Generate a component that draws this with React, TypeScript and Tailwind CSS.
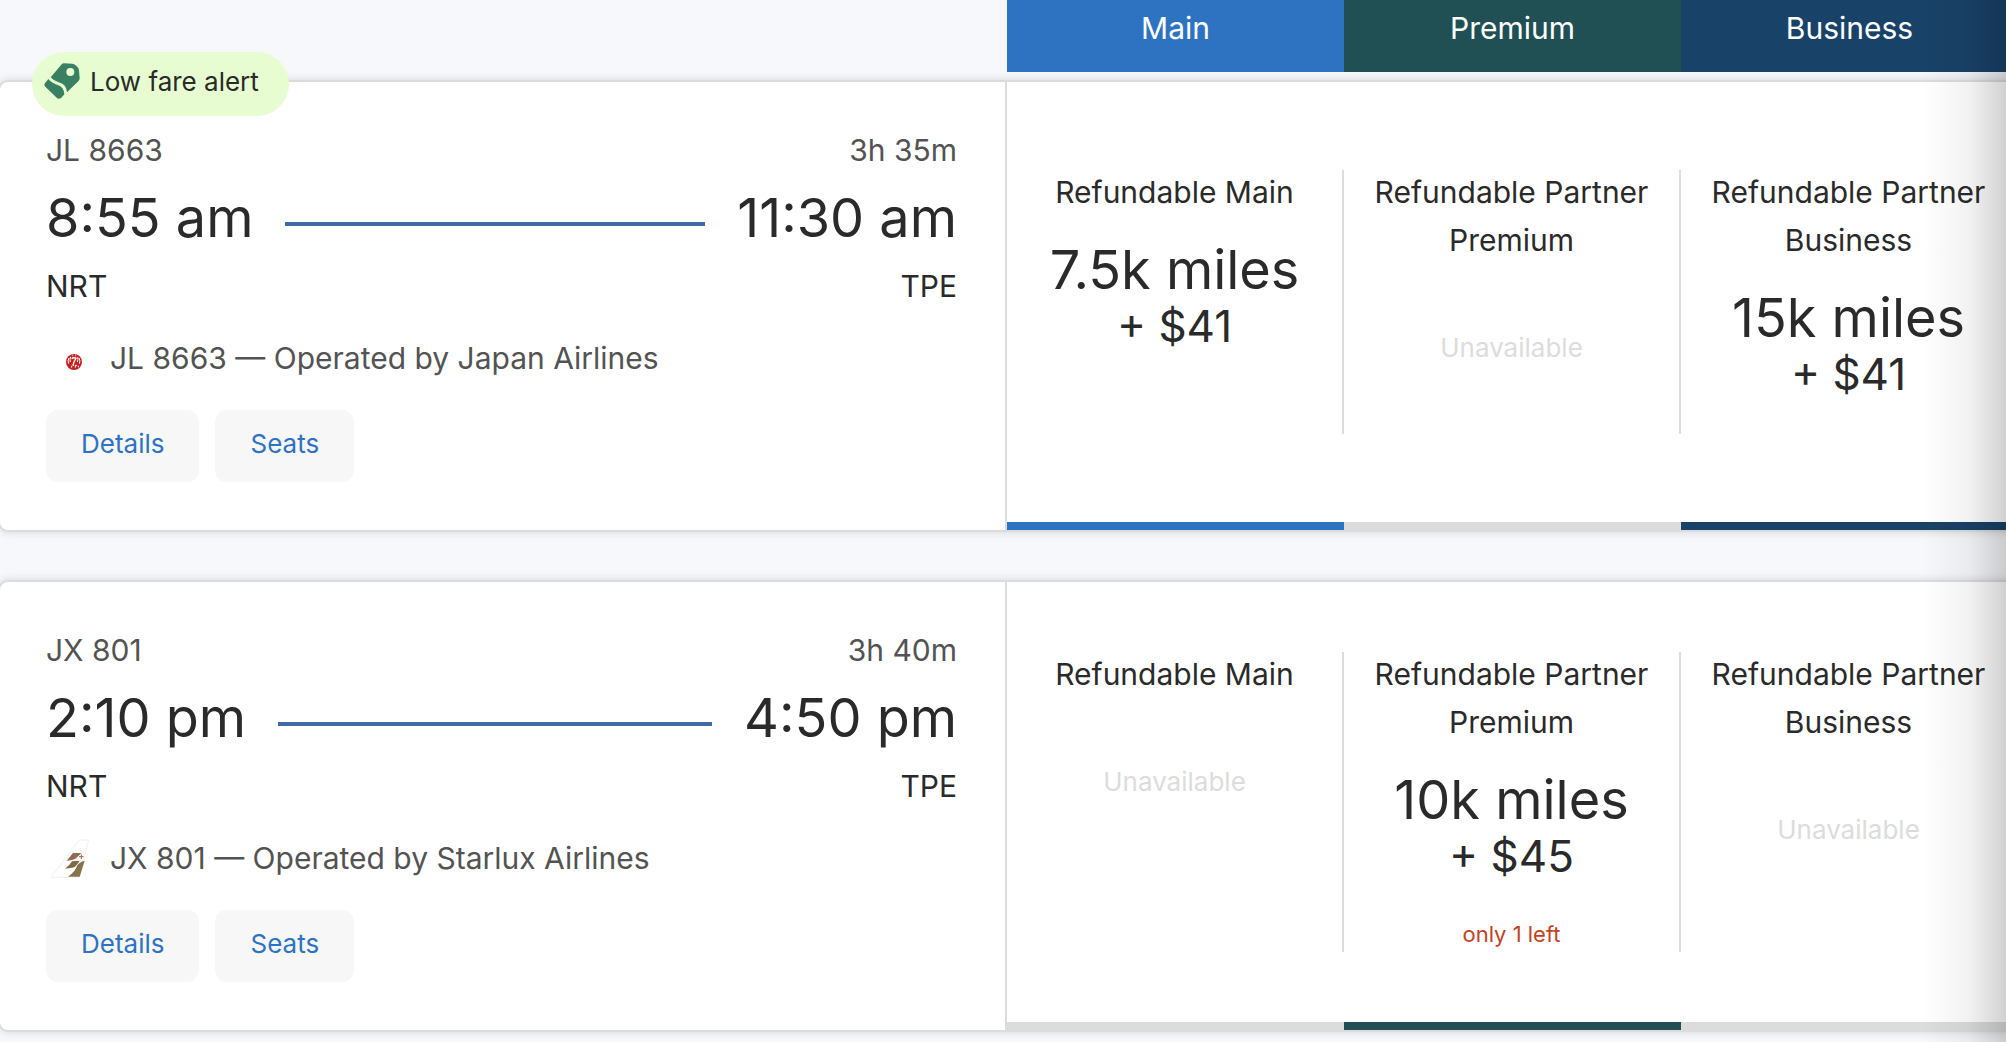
import type { ReactNode } from 'react';
import clsx from 'clsx';

type Fare = {
  name: string;
  cabin: 'main' | 'premium' | 'business';
  miles?: string;
  cash?: string;
  seatsLeft?: string;
};

type Flight = {
  number: string;
  duration: string;
  depart: string;
  arrive: string;
  from: string;
  to: string;
  operator: string;
  logo: ReactNode;
  alert?: string;
  fares: Fare[];
};

const cabins = [
  { label: 'Main', color: 'bg-[#2e73c2]' },
  { label: 'Premium', color: 'bg-[#205053]' },
  { label: 'Business', color: 'bg-[#194268]' },
];

const barColors = {
  main: 'bg-[#2e73c2]',
  premium: 'bg-[#205053]',
  business: 'bg-[#194268]',
};

function TagIcon() {
  return (
    <svg viewBox="0 0 106 108" className="h-9 w-9 shrink-0" fill="#388061" aria-hidden="true">
      <path
        fillRule="evenodd"
        d="M58 1 84 2Q90 3 94 7L100 13Q104 17 104 23L106 46Q106 51 102 55L68 88Q67 74 60 67 54 61 43 58 28 54 19 43 20 41 23 38L52 4Q55 1 58 1ZM78 15A12 12 0 1 0 78 39 12 12 0 1 0 78 15Z"
      />
      <path d="M12 48Q24 62 40 66 59 72 60 94L51 104Q44 110 37 104L3 71Q-2 66 2 61Z" />
    </svg>
  );
}

function JapanAirlinesLogo() {
  return (
    <svg viewBox="-60 -48 168 120" className="h-10 w-14" aria-hidden="true">
      <circle cx="24" cy="24" r="24" fill="#c4201f" />
      <g fill="none" stroke="#fff">
        <path d="M17 14Q23 9 30 13L23 26 21 36" strokeWidth="4" />
        <path d="M9 12Q4 21 8 29M39 12Q44 21 40 29" strokeWidth="3" />
        <path d="M14 8Q11 16 13 24M35 9Q37 17 34 24" strokeWidth="3" />
        <path d="M17 41V35M28 41V34H33M37 40V35" strokeWidth="3" />
        <path d="M20 2V7M29 2V7" strokeWidth="2" />
      </g>
    </svg>
  );
}

function StarluxLogo() {
  return (
    <svg viewBox="-12 -4 168 120" className="h-10 w-14" aria-hidden="true">
      <path d="M88 2H116L89 114H3Z" fill="#fff" stroke="#e9e9e9" strokeWidth="2" />
      <path d="M69 41H94L82 53Q76 62 50 64Z" fill="#94684f" />
      <path d="M66 66 89 64Q79 82 67 85L45 88Q58 80 66 66Z" fill="#806a49" />
      <path d="M104 64 89 112H54Q79 93 81 79Q88 68 104 64Z" fill="#85744b" />
      <path d="M94 45V59M87 52H101" stroke="#94684f" strokeWidth="3" />
    </svg>
  );
}

const flights: Flight[] = [
  {
    number: 'JL 8663',
    duration: '3h 35m',
    depart: '8:55 am',
    arrive: '11:30 am',
    from: 'NRT',
    to: 'TPE',
    operator: 'JL 8663 — Operated by Japan Airlines',
    logo: <JapanAirlinesLogo />,
    alert: 'Low fare alert',
    fares: [
      { name: 'Refundable Main', cabin: 'main', miles: '7.5k miles', cash: '+ $41' },
      { name: 'Refundable Partner Premium', cabin: 'premium' },
      { name: 'Refundable Partner Business', cabin: 'business', miles: '15k miles', cash: '+ $41' },
    ],
  },
  {
    number: 'JX 801',
    duration: '3h 40m',
    depart: '2:10 pm',
    arrive: '4:50 pm',
    from: 'NRT',
    to: 'TPE',
    operator: 'JX 801 — Operated by Starlux Airlines',
    logo: <StarluxLogo />,
    fares: [
      { name: 'Refundable Main', cabin: 'main' },
      {
        name: 'Refundable Partner Premium',
        cabin: 'premium',
        miles: '10k miles',
        cash: '+ $45',
        seatsLeft: 'only 1 left',
      },
      { name: 'Refundable Partner Business', cabin: 'business' },
    ],
  },
];

function FareCell({ fare }: { fare: Fare }) {
  return (
    <button
      type="button"
      disabled={!fare.miles}
      className="flex flex-col items-center border-r-2 border-[#dcdcdc] px-4 text-center text-[#2a2a2a]"
    >
      <span className="-mt-0.5 text-[30px] leading-[48px]">{fare.name}</span>
      {fare.miles ? (
        <>
          <span className="mt-[26px] text-[54px] leading-[56px]">{fare.miles}</span>
          <span className="text-[44px] leading-[56px]">{fare.cash}</span>
          <span className="mt-8 text-[22px] leading-9 text-[#bf4323]">{fare.seatsLeft}</span>
        </>
      ) : (
        <span className="mt-16 text-[26px] leading-10 text-[#dcdcdc]">Unavailable</span>
      )}
    </button>
  );
}

function FlightCard({ flight }: { flight: Flight }) {
  return (
    <article className="relative grid grid-cols-[minmax(0,1fr)_1011px] rounded-[10px] border-2 border-[#dcdcdc] bg-white shadow-[0_0_10px_rgba(0,0,0,0.14)]">
      {flight.alert && (
        <div className="absolute -top-[30px] left-8 flex h-16 items-center gap-2.5 rounded-full bg-[#e7fdd1] pr-[30px] pb-1.5 pl-3 text-[26px] text-[#2a2a2a]">
          <TagIcon />
          <span>{flight.alert}</span>
        </div>
      )}

      <div className="border-r-2 border-[#dcdcdc] pt-11 pr-12 pb-12 pl-[46px] text-[30px] leading-[48px] text-[#2a2a2a]">
        <div className="flex justify-between text-[#535353]">
          <span>{flight.number}</span>
          <span>{flight.duration}</span>
        </div>
        <div className="my-3 flex items-center gap-8 text-[54px] leading-[64px]">
          <span>{flight.depart}</span>
          <span className="mt-3 h-1 flex-1 bg-[#406ba6]" />
          <span>{flight.arrive}</span>
        </div>
        <div className="flex justify-between">
          <span>{flight.from}</span>
          <span>{flight.to}</span>
        </div>
        <div className="mt-6 flex items-center gap-2 text-[#535353]">
          <span className="shrink-0">{flight.logo}</span>
          <span>{flight.operator}</span>
        </div>
        <div className="mt-7 flex gap-4">
          {['Details', 'Seats'].map((label) => (
            <button
              key={label}
              type="button"
              className="rounded-xl bg-[#f7f7f7] px-[35px] pt-3.5 pb-[18px] text-[26px] leading-10 text-[#2e73c2]"
            >
              {label}
            </button>
          ))}
        </div>
      </div>

      <div className="flex flex-col">
        <div className="flex flex-1 items-center">
          <div className="grid w-full grid-cols-3">
            {flight.fares.map((fare) => (
              <FareCell key={fare.cabin} fare={fare} />
            ))}
          </div>
        </div>
        <div className="grid grid-cols-3">
          {flight.fares.map((fare) => (
            <span key={fare.cabin} className={clsx('h-2', fare.miles ? barColors[fare.cabin] : 'bg-[#dcdcdc]')} />
          ))}
        </div>
      </div>
    </article>
  );
}

export default function App() {
  return (
    <main className="relative min-h-screen overflow-hidden bg-[#f7f8fb] font-['Inter','Liberation_Sans',sans-serif]">
      {/* the matrix runs past the right edge and fades into the scroll shadow */}
      <div className="-mr-3.5 -ml-0.5">
        <header className="relative z-10 mb-2 ml-auto grid w-[1013px] grid-cols-3 pr-0.5 text-center text-[30px] leading-[48px] text-white">
          {cabins.map((cabin) => (
            <div key={cabin.label} className={clsx('pt-1 pb-5', cabin.color)}>
              {cabin.label}
            </div>
          ))}
        </header>
        <div className="flex flex-col gap-12">
          {flights.map((flight) => (
            <FlightCard key={flight.number} flight={flight} />
          ))}
        </div>
      </div>
      <div className="pointer-events-none absolute inset-y-0 right-0 z-20 w-[84px] bg-linear-to-r from-black/0 via-black/5 via-55% to-black/18" />
    </main>
  );
}
